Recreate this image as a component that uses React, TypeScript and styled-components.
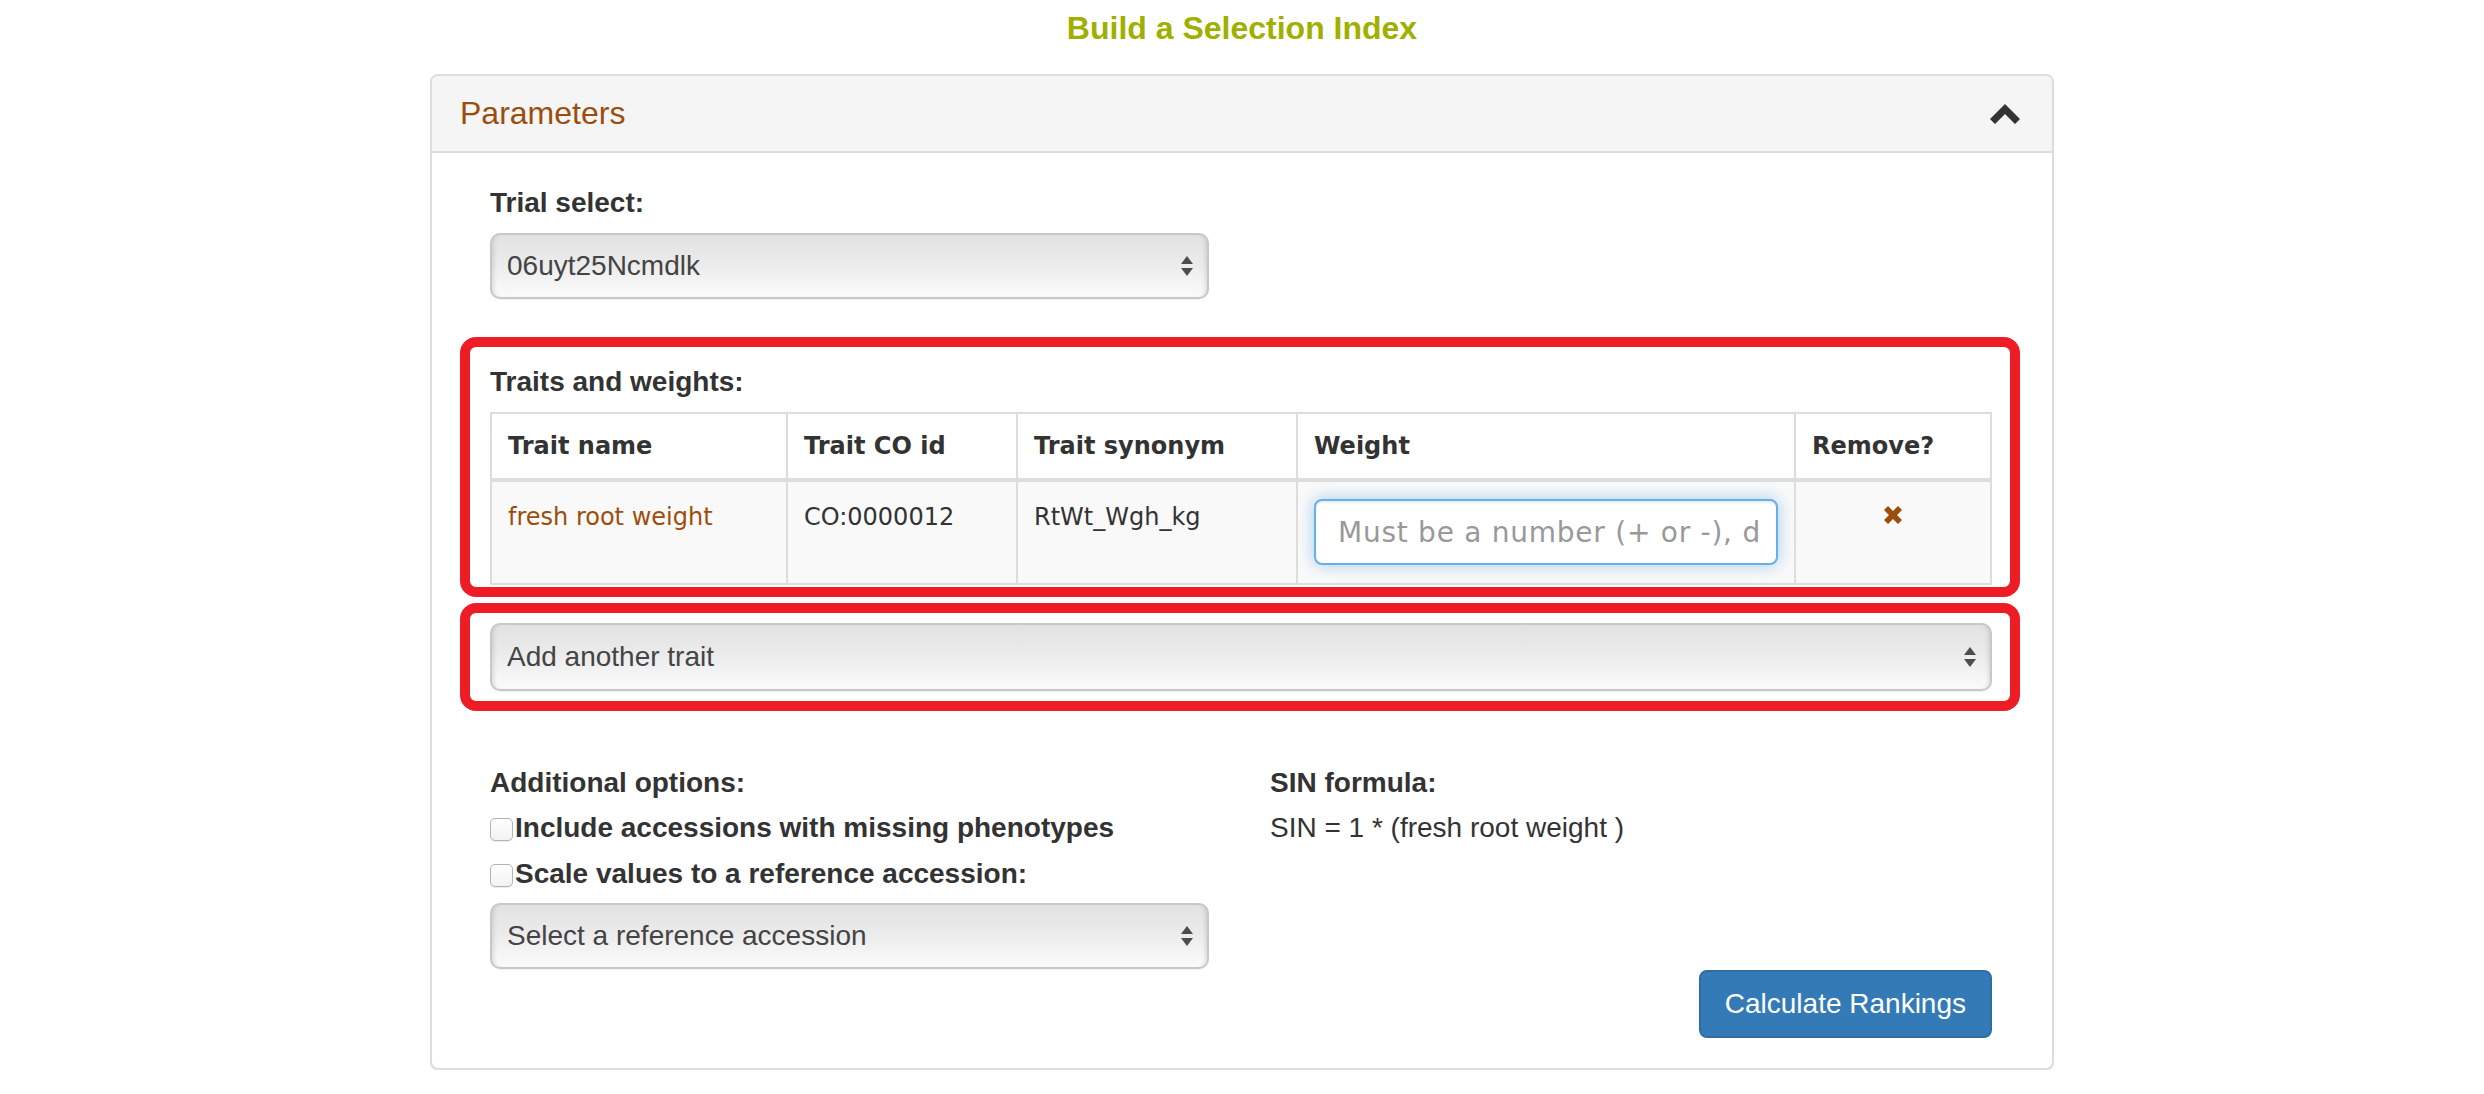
import React from "react";
import styled, { createGlobalStyle } from "styled-components";

const GlobalStyle = createGlobalStyle`
  html, body { margin: 0; padding: 0; background: #fff; }
  body {
    font-family: "Liberation Sans", Arial, Helvetica, sans-serif;
    font-size: 28px;
    line-height: 40px;
    color: #333;
  }
  * { box-sizing: border-box; }
`;

const BROWN = "#9b4e0c";

const Page = styled.div`
  padding-top: 8px;
`;

const Title = styled.h1`
  margin: 0;
  text-align: center;
  font-size: 32px;
  line-height: 40px;
  font-weight: bold;
  color: #a0b000;
`;

const Panel = styled.section`
  width: 1624px;
  margin: 26px auto 0;
  border: 2px solid #ddd;
  border-radius: 8px;
  background: #fff;
  box-shadow: 0 2px 2px rgba(0, 0, 0, 0.05);
`;

const PanelHeading = styled.header`
  display: flex;
  align-items: center;
  justify-content: space-between;
  padding: 20px 32px 20px 28px;
  background: #f5f5f5;
  border-bottom: 2px solid #ddd;
  border-radius: 6px 6px 0 0;
`;

const PanelTitle = styled.h3`
  margin: 0;
  font-size: 32px;
  line-height: 35px;
  font-weight: normal;
  color: ${BROWN};
`;

const PanelBody = styled.div`
  padding: 30px 60px 30px 58px;
`;

const Label = styled.label<{ $gap?: number }>`
  display: block;
  font-weight: bold;
  margin-bottom: ${(p) => p.$gap ?? 10}px;
`;

const SelectBox = styled.div<{ $width?: number; $height?: number }>`
  display: flex;
  align-items: center;
  justify-content: space-between;
  width: ${(p) => (p.$width ? `${p.$width}px` : "100%")};
  height: ${(p) => p.$height ?? 66}px;
  padding: 0 14px 0 15px;
  border: 2px solid #c8c8c8;
  border-radius: 10px;
  background: linear-gradient(to bottom, #e2e2e2 0%, #ebebeb 45%, #fbfbfb 100%);
  box-shadow: inset 5px 0 5px -4px rgba(0, 0, 0, 0.14),
    inset -5px 0 5px -4px rgba(0, 0, 0, 0.14), 0 1px 1px rgba(0, 0, 0, 0.06);
  color: #444;
  font-size: 28px;
  cursor: default;
`;

const Section = styled.div<{ $mt: number }>`
  margin-top: ${(p) => p.$mt}px;
`;

const Highlight = styled.div<{ $top: number; $bottom: number }>`
  position: relative;
  &::after {
    content: "";
    position: absolute;
    top: ${(p) => -p.$top}px;
    bottom: ${(p) => -p.$bottom}px;
    left: -30px;
    right: -28px;
    border: 10px solid #ee1c24;
    border-radius: 16px;
    pointer-events: none;
  }
`;

const Table = styled.table`
  width: 100%;
  border-collapse: collapse;
  table-layout: fixed;
  font-family: "DejaVu Sans", Verdana, sans-serif;
  font-size: 24px;
  line-height: 32px;
  border: 2px solid #ddd;
`;

const Th = styled.th<{ $w?: number }>`
  ${(p) => (p.$w ? `width: ${p.$w}px;` : "")}
  text-align: left;
  padding: 16px;
  border: 2px solid #ddd;
  border-bottom-width: 4px;
  vertical-align: bottom;
  font-weight: bold;
  background: #fff;
`;

const Td = styled.td<{ $center?: boolean }>`
  padding: 17px 16px 18px;
  border: 2px solid #ddd;
  vertical-align: top;
  line-height: 36px;
  background: #f9f9f9;
  text-align: ${(p) => (p.$center ? "center" : "left")};
`;

const TraitLink = styled.a`
  color: ${BROWN};
  text-decoration: none;
`;

const WeightInput = styled.input`
  display: block;
  width: 100%;
  height: 66px;
  padding: 0 14px 0 22px;
  border: 2px solid #66afe9;
  border-radius: 8px;
  background: #fff;
  font-family: "DejaVu Sans", Verdana, sans-serif;
  font-size: 28px;
  letter-spacing: 0.75px;
  color: #555;
  outline: none;
  box-shadow: inset 0 2px 2px rgba(0, 0, 0, 0.075), 0 0 16px rgba(102, 175, 233, 0.6);
  &::placeholder {
    color: #999;
  }
`;

const RemoveIcon = styled.svg`
  display: inline-block;
  vertical-align: top;
  width: 20px;
  height: 20px;
  margin-top: 6px;
  color: ${BROWN};
`;

const OptionsGrid = styled.div`
  display: grid;
  grid-template-columns: 750px 1fr;
  column-gap: 30px;
`;

const Column = styled.div`
  display: flex;
  flex-direction: column;
`;

const CheckRow = styled.label<{ $mt: number }>`
  display: flex;
  align-items: center;
  font-weight: bold;
  margin-top: ${(p) => p.$mt}px;
`;

const CheckBox = styled.input`
  appearance: none;
  -webkit-appearance: none;
  flex: none;
  width: 23px;
  height: 23px;
  margin: 2px 2px 0 0;
  border: 1.5px solid #b3b3b3;
  border-radius: 5px;
  background: linear-gradient(to bottom, #ffffff, #f2f2f2);
  box-shadow: 0 1px 1px rgba(0, 0, 0, 0.08);
`;

const Formula = styled.div`
  margin-top: 5px;
`;

const ButtonRow = styled.div`
  display: flex;
  justify-content: flex-end;
  margin-top: 1px;
`;

const PrimaryButton = styled.button`
  height: 68px;
  padding: 0 24px;
  background: #337ab7;
  border: 2px solid #2e6da4;
  border-radius: 8px;
  color: #fff;
  font-family: "Liberation Sans", Arial, Helvetica, sans-serif;
  font-size: 28px;
  cursor: pointer;
`;

const Arrows = () => (
  <svg width="12" height="20" viewBox="0 0 12 20" aria-hidden="true">
    <polygon points="0,8 6,0 12,8" fill="#4d4d4d" />
    <polygon points="0,12 12,12 6,20" fill="#4d4d4d" />
  </svg>
);

const Select: React.FC<{ value: string; width?: number; height?: number }> = ({
  value,
  width,
  height,
}) => (
  <SelectBox $width={width} $height={height} role="combobox">
    <span>{value}</span>
    <Arrows />
  </SelectBox>
);

const ChevronUp = () => (
  <svg width="30" height="20" viewBox="0 0 30 20" aria-hidden="true">
    <path d="M0 15 L15 0 L30 15 L25 20 L15 10 L5 20 Z" fill="#333" />
  </svg>
);

const columns: { label: string; w?: number }[] = [
  { label: "Trait name", w: 296 },
  { label: "Trait CO id", w: 230 },
  { label: "Trait synonym", w: 280 },
  { label: "Weight", w: 498 },
  { label: "Remove?" },
];

export default function App() {
  return (
    <>
      <GlobalStyle />
      <Page>
        <Title>Build a Selection Index</Title>
        <Panel>
          <PanelHeading>
            <PanelTitle>Parameters</PanelTitle>
            <ChevronUp />
          </PanelHeading>
          <PanelBody>
            <Label>Trial select:</Label>
            <Select value="06uyt25Ncmdlk" width={719} />

            <Section $mt={63}>
              <Highlight $top={25} $bottom={12}>
                <Label>Traits and weights:</Label>
                <Table>
                  <thead>
                    <tr>
                      {columns.map((c) => (
                        <Th key={c.label} $w={c.w}>
                          {c.label}
                        </Th>
                      ))}
                    </tr>
                  </thead>
                  <tbody>
                    <tr>
                      <Td>
                        <TraitLink href="#">fresh root weight</TraitLink>
                      </Td>
                      <Td>CO:0000012</Td>
                      <Td>RtWt_Wgh_kg</Td>
                      <Td>
                        <WeightInput placeholder="Must be a number (+ or -), default 0" />
                      </Td>
                      <Td $center>
                        <RemoveIcon viewBox="0 0 20 20" aria-label="remove">
                          <path
                            d="M1 5 L5 1 L10 6 L15 1 L19 5 L14 10 L19 15 L15 19 L10 14 L5 19 L1 15 L6 10 Z"
                            fill="currentColor"
                          />
                        </RemoveIcon>
                      </Td>
                    </tr>
                  </tbody>
                </Table>
              </Highlight>
            </Section>

            <Section $mt={38}>
              <Highlight $top={20} $bottom={20}>
                <Select value="Add another trait" height={68} />
              </Highlight>
            </Section>

            <Section $mt={72}>
              <OptionsGrid>
                <Column>
                  <Label $gap={5}>Additional options:</Label>
                  <CheckRow $mt={0}>
                    <CheckBox type="checkbox" />
                    Include accessions with missing phenotypes
                  </CheckRow>
                  <CheckRow $mt={6}>
                    <CheckBox type="checkbox" />
                    Scale values to a reference accession:
                  </CheckRow>
                  <Section $mt={9}>
                    <Select value="Select a reference accession" width={719} />
                  </Section>
                </Column>
                <Column>
                  <Label $gap={0}>SIN formula:</Label>
                  <Formula>SIN = 1 * (fresh root weight )</Formula>
                </Column>
              </OptionsGrid>
            </Section>

            <ButtonRow>
              <PrimaryButton type="button">Calculate Rankings</PrimaryButton>
            </ButtonRow>
          </PanelBody>
        </Panel>
      </Page>
    </>
  );
}
